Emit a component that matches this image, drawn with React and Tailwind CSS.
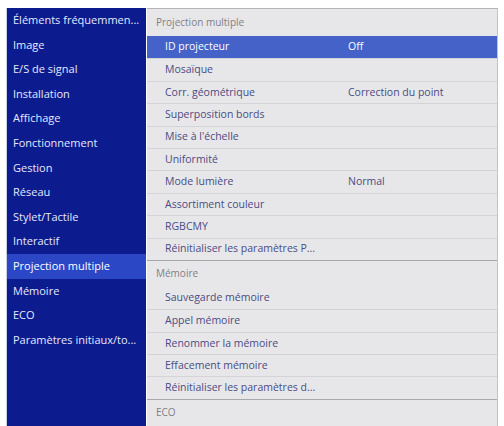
const LEFT = [
  "Éléments fréquemmen...",
  "Image",
  "E/S de signal",
  "Installation",
  "Affichage",
  "Fonctionnement",
  "Gestion",
  "Réseau",
  "Stylet/Tactile",
  "Interactif",
  "Projection multiple",
  "Mémoire",
  "ECO",
  "Paramètres initiaux/to...",
];

const SECTIONS = [
  {
    title: "Projection multiple",
    h: "h-[27px]",
    items: [
      ["ID projecteur", "Off", true],
      ["Mosaïque"],
      ["Corr. géométrique", "Correction du point"],
      ["Superposition bords"],
      ["Mise à l'échelle"],
      ["Uniformité"],
      ["Mode lumière", "Normal"],
      ["Assortiment couleur"],
      ["RGBCMY"],
      ["Réinitialiser les paramètres P..."],
    ],
  },
  {
    title: "Mémoire",
    h: "h-[26px]",
    items: [
      ["Sauvegarde mémoire"],
      ["Appel mémoire"],
      ["Renommer la mémoire"],
      ["Effacement mémoire"],
      ["Réinitialiser les paramètres d..."],
    ],
  },
  { title: "ECO", h: "h-[26px]", items: [] },
];

export default function App() {
  return (
    <div
      className="w-[504px] h-[426px] bg-white pl-[6px] pr-[6px] pt-[8px] flex overflow-hidden"
      style={{ fontFamily: '"Open Sans", "Noto Sans", sans-serif' }}
    >
      {/* Menu categories */}
      <div className="w-[140px] bg-[#0c1c8e] flex flex-col pt-[0px] border-l border-[#c9cde8]">
        {LEFT.map((label) => (
          <div
            key={label}
            className={`h-[24.6px] flex items-center pl-[6px] text-[11px] whitespace-nowrap ${
              label === "Projection multiple" ? "bg-[#2c47c6] text-white" : "text-[#e4e8ff]"
            }`}
          >
            {label}
          </div>
        ))}
      </div>

      {/* Sub menu */}
      <div className="flex-1 ml-[1px] bg-[#e7e7ea] border-t border-[#b4b4b8] border-r border-r-[#c4c4c8] flex flex-col">
        {SECTIONS.map((s, si) => (
          <div key={s.title} className={si > 0 ? "border-t border-[#a9a9ad]" : ""}>
            <div className={`${s.h} flex items-center pl-[9px] text-[10px] text-[#7f7f86]`}>
              {s.title}
            </div>
            {s.items.map(([label, value, active], i) => (
              <div
                key={label}
                className={`h-[22.4px] flex items-center text-[10.5px] whitespace-nowrap ${
                  active
                    ? "bg-[#4462c8] text-white"
                    : "text-[#4b4b82] border-t border-[#d3d3d8]"
                } ${i === 0 ? "border-t-0" : ""}`}
              >
                <span className="pl-[18px] w-[201px]">{label}</span>
                {value && <span>{value}</span>}
              </div>
            ))}
          </div>
        ))}
      </div>
    </div>
  );
}
